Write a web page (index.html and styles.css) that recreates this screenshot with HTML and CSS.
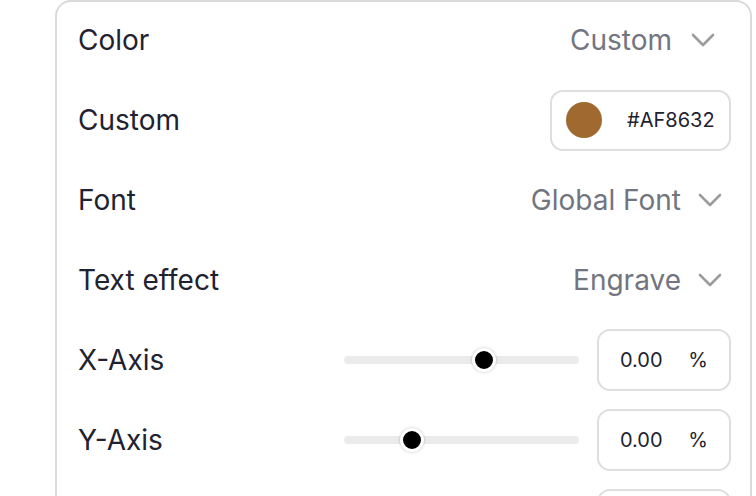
FILE: index.html
```html
<!DOCTYPE html>
<html>
<head>
<meta charset="utf-8">
<link rel="stylesheet" href="styles.css">
</head>
<body>
<div class="panel">
  <div class="row">
    <span class="label">Color</span>
    <span class="select select-first">Custom
      <svg class="chev" viewBox="0 0 24 14" width="24" height="14"><polyline points="2,2 12,12 22,2"/></svg>
    </span>
  </div>
  <div class="row">
    <span class="label">Custom</span>
    <div class="color-input">
      <span class="swatch"></span>
      <span class="hex">#AF8632</span>
    </div>
  </div>
  <div class="row">
    <span class="label">Font</span>
    <span class="select">Global Font
      <svg class="chev" viewBox="0 0 24 14" width="24" height="14"><polyline points="2,2 12,12 22,2"/></svg>
    </span>
  </div>
  <div class="row">
    <span class="label">Text effect</span>
    <span class="select">Engrave
      <svg class="chev" viewBox="0 0 24 14" width="24" height="14"><polyline points="2,2 12,12 22,2"/></svg>
    </span>
  </div>
  <div class="row">
    <span class="label">X-Axis</span>
    <div class="slider"><span class="thumb" style="left:59.6%"></span></div>
    <div class="num"><span>0.00</span><span>%</span></div>
  </div>
  <div class="row">
    <span class="label">Y-Axis</span>
    <div class="slider"><span class="thumb" style="left:28.9%"></span></div>
    <div class="num"><span>0.00</span><span>%</span></div>
  </div>
  <div class="row">
    <span class="label"></span>
    <div class="num"></div>
  </div>
</div>
</body>
</html>
```
FILE: styles.css
```css
html, body {
  margin: 0;
  padding: 0;
  background: #ffffff;
  overflow: hidden;
}
body {
  font-family: Inter, "Noto Sans", sans-serif;
  color: #1f2230;
}
.panel {
  margin-left: 55px;
  width: 697px;
  box-sizing: border-box;
  border: 2px solid #dadada;
  border-bottom: none;
  border-radius: 16px 16px 0 0;
  padding: 0 19px 0 21px;
  height: 560px;
}
.row {
  height: 80px;
  display: flex;
  align-items: center;
  margin-top: -2px;
}
.row + .row { margin-top: 0; }
.label {
  font-size: 28px;
  flex: 1;
}
.select {
  display: flex;
  align-items: center;
  gap: 17px;
  font-size: 28px;
  color: #72757f;
  margin-right: 9px;
}
.select-first {
  gap: 19px;
  margin-right: 16px;
}
.chev {
  fill: none;
  stroke: #9c9c9c;
  stroke-width: 2.6;
  stroke-linecap: round;
  stroke-linejoin: round;
}
.color-input {
  width: 181px;
  height: 61px;
  box-sizing: border-box;
  border: 2px solid #dedede;
  border-radius: 13px;
  display: flex;
  align-items: center;
  padding-left: 14px;
  gap: 25px;
}
.swatch {
  width: 36px;
  height: 36px;
  border-radius: 50%;
  background: #a06930;
}
.hex {
  font-size: 20px;
  color: #1f2230;
}
.slider {
  position: relative;
  width: 235px;
  height: 8px;
  border-radius: 4px;
  background: #ebebeb;
  margin-right: 18px;
}
.thumb {
  position: absolute;
  top: 50%;
  width: 18px;
  height: 18px;
  border-radius: 50%;
  background: #000;
  border: 3px solid #fff;
  box-shadow: 0 0 3px rgba(0,0,0,0.25);
  transform: translate(-50%, -50%);
}
.num {
  width: 134px;
  height: 62px;
  box-sizing: border-box;
  border: 2px solid #dedede;
  border-radius: 13px;
  display: flex;
  align-items: center;
  justify-content: space-between;
  padding: 0 21px 0 21px;
  font-size: 20px;
  color: #1f2230;
}
```
